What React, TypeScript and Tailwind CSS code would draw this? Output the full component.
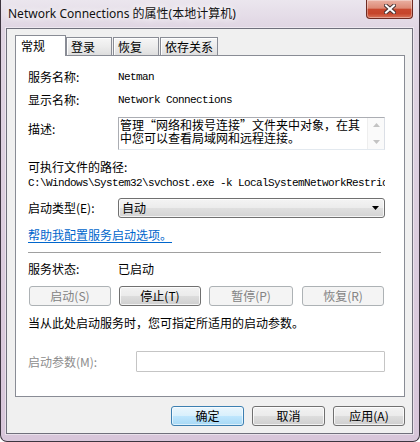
import React from "react";

const btnBase =
  "flex items-center justify-center rounded-[3px] border text-[12px] leading-[16px] whitespace-nowrap";
const btnNormal =
  "border-[#707070] bg-[linear-gradient(#f2f2f2_0%,#ebebeb_48%,#dddddd_52%,#cfcfcf_100%)] text-black shadow-[inset_0_0_0_1px_rgba(255,255,255,0.75)]";
const btnDisabled = "border-[#adb2b5] bg-[#f4f4f4] text-[#838383]";
const btnDefault =
  "border-[#3c7fb1] bg-[linear-gradient(#eaf6fd_0%,#d9f0fc_48%,#bee6fd_52%,#a7d9f5_100%)] text-black shadow-[inset_0_0_0_1px_rgba(255,255,255,0.6)]";

const mono = "font-['Liberation_Mono',monospace] text-[11px] tracking-[-0.6px]";

function Tab({ w, ml, children }: { w: number; ml: number; children: React.ReactNode }) {
  return (
    <div
      className="h-[18px] border border-b-0 border-[#898c95] bg-[linear-gradient(#f6f6f6_0%,#ececec_50%,#dedede_100%)] shadow-[inset_1px_1px_0_rgba(255,255,255,0.9)] pl-[4px] pt-[1px] text-[12px] leading-[16px] text-black"
      style={{ width: w, marginLeft: ml }}
    >
      {children}
    </div>
  );
}

export default function App() {
  return (
    <div className="w-[420px] h-[442px] font-['Noto_Sans_CJK_SC',sans-serif] text-black">
      <div className="relative w-[420px] h-[442px] flex flex-col border-x border-b border-[#3d3540] rounded-b-[7px] bg-[linear-gradient(180deg,#ebe6ee_0%,#dfd4e2_30px,#d8c6da_100%)] overflow-hidden">
        {/* title bar */}
        <div className="h-[28px] flex items-center pl-[7px] shrink-0">
          <span className="font-['Noto_Sans','Noto_Sans_CJK_SC',sans-serif] text-[12px] leading-[16px] text-[#111] [text-shadow:0_0_6px_#fff,0_0_10px_#fff]">
            Network Connections 的属性(本地计算机)
          </span>
        </div>
        {/* close button */}
        <div className="absolute top-0 right-[6px] w-[47px] h-[19px] rounded-b-[4px] border border-t-0 border-[#6e2a22] bg-[linear-gradient(#eab0a2_0%,#dd8a76_45%,#c8482f_52%,#c6452b_75%,#d9745a_100%)] shadow-[inset_0_0_0_1px_rgba(255,255,255,0.35)] flex items-center justify-center">
          <svg width="12" height="10" viewBox="0 0 12 10">
            <path d="M2 1.5 L10 8.5 M10 1.5 L2 8.5" stroke="#4b3434" strokeWidth="4" strokeLinecap="square" />
            <path d="M2 1.5 L10 8.5 M10 1.5 L2 8.5" stroke="#ffffff" strokeWidth="2" strokeLinecap="square" />
          </svg>
        </div>

        {/* client area */}
        <div className="ml-[5px] w-[407px] h-[406px] border border-[#70707c] bg-[#f0f0f0] shadow-[0_0_0_1px_rgba(255,255,255,0.45)] flex flex-col">
          {/* tabs */}
          <div className="mt-[6px] pl-[8px] h-[20px] flex items-end relative z-10">
            <div className="w-[51px] h-[21px] -mb-px border border-b-0 border-[#898c95] bg-white pl-[5px] pt-[2px] text-[12px] leading-[16px]">
              常规
            </div>
            <Tab w={46} ml={0}>登录</Tab>
            <Tab w={46} ml={1}>恢复</Tab>
            <Tab w={58} ml={1}>依存关系</Tab>
          </div>
          {/* panel */}
          <div className="ml-[8px] w-[390px] h-[342px] border border-[#898c95] bg-white pl-[12px] text-[12px] leading-[16px]">
            <div className="w-[357px] flex flex-col">
              <div className="mt-[13px] h-[16px] flex">
                <div className="w-[90px]">服务名称:</div>
                <div className={mono}>Netman</div>
              </div>
              <div className="mt-[7px] h-[16px] flex">
                <div className="w-[90px]">显示名称:</div>
                <div className={mono}>Network Connections</div>
              </div>
              <div className="mt-[9px] h-[33px] flex">
                <div className="w-[90px] pt-[4px]">描述:</div>
                <div className="flex-1 flex border border-t-[#abadb3] border-l-[#abadb3] border-r-[#dbdfe6] border-b-[#e3e9ef] bg-white">
                  <div className="flex-1 pl-[1px] text-[12px] leading-[13px] whitespace-nowrap">
                    <div>管理“网络和拨号连接”文件夹中对象，在其</div>
                    <div>中您可以查看局域网和远程连接。</div>
                  </div>
                  <div className="w-[17px] flex flex-col items-center justify-between py-[5px] bg-[#fafafa] border-l border-[#eeeeee]">
                    <svg width="7" height="4" viewBox="0 0 7 4">
                      <polygon points="3.5,0 7,4 0,4" fill="#c3c3c3" />
                    </svg>
                    <svg width="7" height="4" viewBox="0 0 7 4">
                      <polygon points="0,0 7,0 3.5,4" fill="#c3c3c3" />
                    </svg>
                  </div>
                </div>
              </div>
              <div className="mt-[9px] h-[16px]">可执行文件的路径:</div>
              <div className={"h-[16px] whitespace-nowrap overflow-hidden " + mono}>
                C:\Windows\System32\svchost.exe -k LocalSystemNetworkRestric
              </div>
              <div className="mt-[7px] h-[20px] flex items-center">
                <div className="w-[90px]">启动类型(E):</div>
                <div className="flex-1 h-[20px] flex items-center justify-between rounded-[3px] border border-[#707070] bg-[linear-gradient(#f4f4f4_0%,#ececec_48%,#dfdfdf_52%,#d3d3d3_100%)] shadow-[inset_0_0_0_1px_rgba(255,255,255,0.75)] pl-[3px] pr-[5px]">
                  <span>自动</span>
                  <svg width="7" height="4" viewBox="0 0 7 4">
                    <polygon points="0,0 7,0 3.5,4" fill="#000" />
                  </svg>
                </div>
              </div>
              <div className="mt-[9px] h-[16px]">
                <span className="text-[#0066cc] underline underline-offset-[2px]">帮助我配置服务启动选项。</span>
              </div>
              <div className="mt-[9px] h-px w-[353px] bg-[#a0a0a0]" />
              <div className="mt-[8px] h-[16px] flex">
                <div className="w-[90px]">服务状态:</div>
                <div>已启动</div>
              </div>
              <div className="mt-[9px] h-[20px] flex">
                <div className={btnBase + " " + btnDisabled + " ml-[1px] w-[82px]"}>启动(S)</div>
                <div className={btnBase + " " + btnNormal + " ml-[8px] w-[82px]"}>停止(T)</div>
                <div className={btnBase + " " + btnDisabled + " ml-[8px] w-[84px]"}>暂停(P)</div>
                <div className={btnBase + " " + btnDisabled + " ml-[9px] w-[82px]"}>恢复(R)</div>
              </div>
              <div className="mt-[9px] h-[16px] whitespace-nowrap">当从此处启动服务时，您可指定所适用的启动参数。</div>
              <div className="mt-[20px] h-[21px] flex items-center">
                <div className="w-[108px] text-[#8d8d8d]">启动参数(M):</div>
                <div className="flex-1 h-[21px] border border-[#c5c5c5] bg-white rounded-[1px]" />
              </div>
            </div>
          </div>
          {/* bottom buttons */}
          <div className="mt-[9px] pr-[7px] h-[20px] flex justify-end">
            <div className={btnBase + " " + btnDefault + " w-[73px]"}>确定</div>
            <div className={btnBase + " " + btnNormal + " ml-[8px] w-[73px]"}>取消</div>
            <div className={btnBase + " " + btnNormal + " ml-[8px] w-[72px]"}>应用(A)</div>
          </div>
        </div>
      </div>
    </div>
  );
}
